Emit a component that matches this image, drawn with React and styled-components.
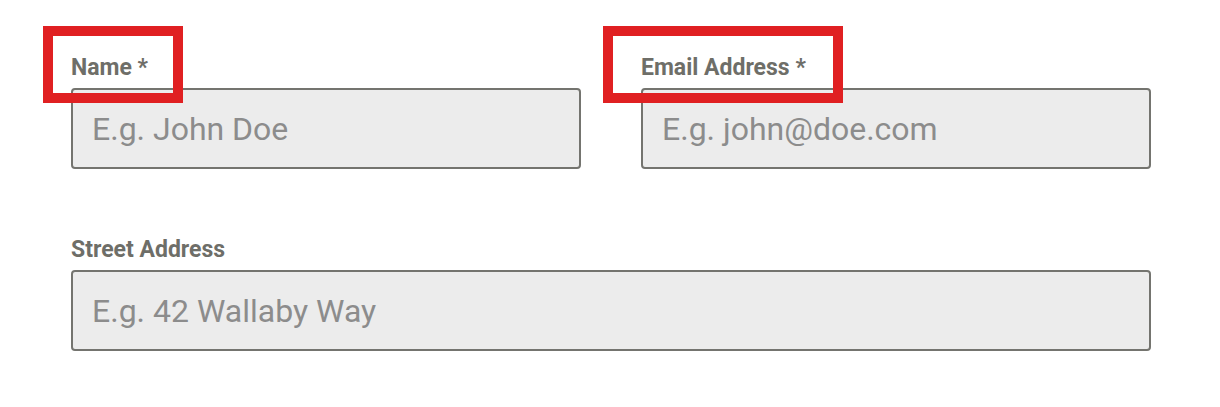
import React from 'react'
import styled, { createGlobalStyle } from 'styled-components'

const GlobalStyle = createGlobalStyle`
  body {
    margin: 0;
    background: #ffffff;
    font-family: Roboto, "Liberation Sans", sans-serif;
  }
`;

export default function App() {
  return (
    <>
      <GlobalStyle />
      <Form>
        <Row>
          <Field>
            <LabelWrap>
              <Label htmlFor="name">Name *</Label>
              <Highlight $left={-28} $width={140} />
            </LabelWrap>
            <Input id="name" placeholder="E.g. John Doe" />
          </Field>
          <Field>
            <LabelWrap>
              <Label htmlFor="email">Email Address *</Label>
              <Highlight $left={-38} $width={240} />
            </LabelWrap>
            <Input id="email" placeholder="E.g. john@doe.com" />
          </Field>
        </Row>
        <Row $single>
          <Field>
            <LabelWrap>
              <Label htmlFor="street">Street Address</Label>
            </LabelWrap>
            <Input id="street" placeholder="E.g. 42 Wallaby Way" />
          </Field>
        </Row>
      </Form>
    </>
  )
}

const Form = styled.form`
    width: 1080px;
    padding: 54px 0 0 71px;
    display: flex;
    flex-direction: column;
    gap: 67px;
`;

const Row = styled.div`
    display: grid;
    grid-template-columns: ${p => (p.$single ? '1fr' : '1fr 1fr')};
    column-gap: 60px;
`;

const Field = styled.div`
    display: flex;
    flex-direction: column;
`;

const LabelWrap = styled.div`
    position: relative;
    margin-bottom: 7px;
`;

const Label = styled.label`
    display: block;
    font-size: 23px;
    line-height: 27px;
    font-weight: 700;
    color: #6e6e68;
`;

const Highlight = styled.div`
    position: absolute;
    left: ${p => p.$left}px;
    top: -28px;
    width: ${p => p.$width}px;
    height: 77px;
    box-sizing: border-box;
    border: 10px solid #e02022;
    pointer-events: none;
`;

const Input = styled.input`
    box-sizing: border-box;
    height: 81px;
    width: 100%;
    padding: 0 19px;
    border: 2px solid #74746f;
    border-radius: 4px;
    background: #ececec;
    font-family: Roboto, "Liberation Sans", sans-serif;
    font-size: 32px;
    color: #555;
    outline: none;

    &::placeholder {
        color: #8c8c8c;
    }
`;
